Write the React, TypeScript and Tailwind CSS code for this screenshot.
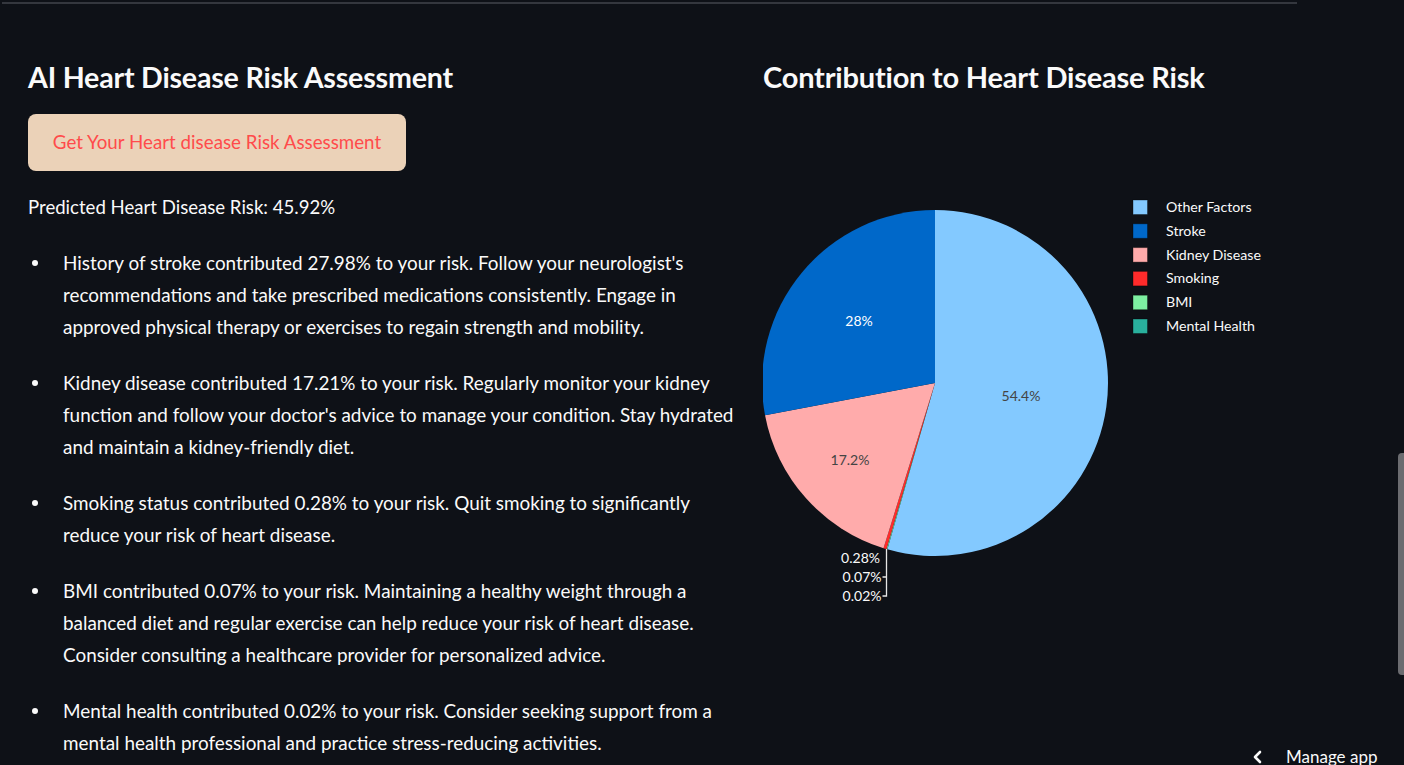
import React from "react";

const FONT = { fontFamily: "Lato, 'Noto Sans', sans-serif" };

type Slice = { name: string; v: number; color: string };

const slices: Slice[] = [
  { name: "Other Factors", v: 54.44, color: "#83c9ff" },
  { name: "Mental Health", v: 0.02, color: "#29b09d" },
  { name: "BMI", v: 0.07, color: "#7defa1" },
  { name: "Smoking", v: 0.28, color: "#ff2b2b" },
  { name: "Kidney Disease", v: 17.21, color: "#ffabab" },
  { name: "Stroke", v: 27.98, color: "#0068c9" },
];

const legend = [
  { name: "Other Factors", color: "#83c9ff" },
  { name: "Stroke", color: "#0068c9" },
  { name: "Kidney Disease", color: "#ffabab" },
  { name: "Smoking", color: "#ff2b2b" },
  { name: "BMI", color: "#7defa1" },
  { name: "Mental Health", color: "#29b09d" },
];

const items: string[][] = [
  [
    "History of stroke contributed 27.98% to your risk. Follow your neurologist's",
    "recommendations and take prescribed medications consistently. Engage in",
    "approved physical therapy or exercises to regain strength and mobility.",
  ],
  [
    "Kidney disease contributed 17.21% to your risk. Regularly monitor your kidney",
    "function and follow your doctor's advice to manage your condition. Stay hydrated",
    "and maintain a kidney-friendly diet.",
  ],
  [
    "Smoking status contributed 0.28% to your risk. Quit smoking to significantly",
    "reduce your risk of heart disease.",
  ],
  [
    "BMI contributed 0.07% to your risk. Maintaining a healthy weight through a",
    "balanced diet and regular exercise can help reduce your risk of heart disease.",
    "Consider consulting a healthcare provider for personalized advice.",
  ],
  [
    "Mental health contributed 0.02% to your risk. Consider seeking support from a",
    "mental health professional and practice stress-reducing activities.",
  ],
];

function PieChart() {
  const cx = 172;
  const cy = 273;
  const r = 173;
  const total = slices.reduce((s, x) => s + x.v, 0);
  let acc = 0;
  const pt = (deg: number) => {
    const a = (deg * Math.PI) / 180;
    return [cx + r * Math.sin(a), cy - r * Math.cos(a)];
  };
  const paths = slices.map((s) => {
    const a0 = (acc / total) * 360;
    acc += s.v;
    const a1 = (acc / total) * 360;
    const [x0, y0] = pt(a0);
    const [x1, y1] = pt(a1);
    const large = a1 - a0 > 180 ? 1 : 0;
    return (
      <path
        key={s.name}
        d={`M${cx},${cy} L${x0},${y0} A${r},${r} 0 ${large} 1 ${x1},${y1} Z`}
        fill={s.color}
      />
    );
  });
  return (
    <svg width="640" height="520" viewBox="0 0 640 520" style={FONT}>
      {paths}
      <text x="258" y="291" fontSize="14" fill="#444" textAnchor="middle">54.4%</text>
      <text x="96" y="216" fontSize="14" fill="#ffffff" textAnchor="middle">28%</text>
      <text x="87" y="355" fontSize="14" fill="#444" textAnchor="middle">17.2%</text>
      <text x="117" y="453" fontSize="14" fill="#fafafa" textAnchor="end">0.28%</text>
      <text x="118.5" y="472" fontSize="14" fill="#fafafa" textAnchor="end">0.07%</text>
      <text x="118.5" y="491" fontSize="14" fill="#fafafa" textAnchor="end">0.02%</text>
      <path
        d="M123.5,439 L123.5,486 L119.5,486 M123.5,467 L119.5,467"
        stroke="#e6e6e6"
        strokeWidth="1.3"
        fill="none"
      />
      {legend.map((l, i) => (
        <g key={l.name}>
          <rect
            x="370"
            y={90 + i * 23.8}
            width="14.5"
            height="14.5"
            fill={l.color}
            stroke="rgba(0,0,0,0.35)"
            strokeWidth="1"
          />
          <text x="403" y={102 + i * 23.8} fontSize="14.2" fill="#fafafa">
            {l.name}
          </text>
        </g>
      ))}
    </svg>
  );
}

export default function App() {
  return (
    <div
      className="relative w-[1404px] h-[765px] overflow-hidden bg-[#0e1117] text-[#fafafa]"
      style={FONT}
    >
      <div className="ml-[2px] mt-[2px] w-[1295px] h-[2px] bg-[#34373e]" />
      <div className="flex">
        <div className="w-[763px] pl-[28px] pt-[53px] shrink-0">
          <h3 className="text-[28.6px] leading-[40px] font-bold tracking-[-0.2px] whitespace-nowrap">
            AI Heart Disease Risk Assessment
          </h3>
          <button className="mt-[17px] w-[378px] h-[57px] rounded-[8px] bg-[#ebd2b8] text-[#ff4b4b] text-[18.75px] whitespace-nowrap">
            Get Your Heart disease Risk Assessment
          </button>
          <p className="mt-[20px] text-[18.6px] leading-[32px] whitespace-nowrap">
            Predicted Heart Disease Risk: 45.92%
          </p>
          <ul className="mt-[24px] flex flex-col gap-[24px]">
            {items.map((lines, i) => (
              <li key={i} className="flex text-[18.9px] leading-[32px]">
                <div className="w-[35px] shrink-0 flex items-start">
                  <div className="mt-[13px] ml-[4px] w-[6px] h-[6px] rounded-full bg-[#fafafa]" />
                </div>
                <div className="flex flex-col">
                  {lines.map((ln, j) => (
                    <span key={j} className="whitespace-nowrap">
                      {ln}
                    </span>
                  ))}
                </div>
              </li>
            ))}
          </ul>
        </div>
        <div className="flex-1 pt-[53px]">
          <h3 className="text-[29px] leading-[40px] font-bold tracking-[-0.2px] whitespace-nowrap">
            Contribution to Heart Disease Risk
          </h3>
          <div className="mt-[13px]">
            <PieChart />
          </div>
        </div>
      </div>
      <div className="absolute right-0 top-[453px] w-[6px] h-[222px] rounded-tl-[4px] rounded-bl-[4px] bg-[#6b6c70]" />
      <div className="absolute left-[1251px] top-[744px] flex items-center gap-[21px] text-[17px] leading-[26px]">
        <svg width="14" height="14" viewBox="0 0 14 14">
          <path d="M9 2 L4 7 L9 12" stroke="#fafafa" strokeWidth="2.6" fill="none" strokeLinecap="round" strokeLinejoin="round" />
        </svg>
        <span>Manage app</span>
      </div>
    </div>
  );
}
